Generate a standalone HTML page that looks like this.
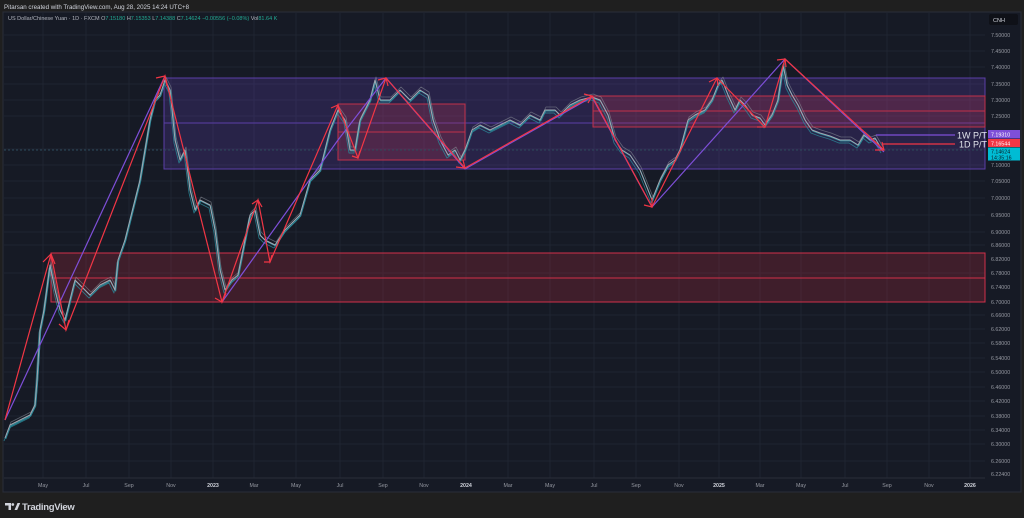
<!DOCTYPE html>
<html><head><meta charset="utf-8"><style>
html,body{margin:0;padding:0;background:#1f1f1f;width:1024px;height:518px;overflow:hidden;font-family:"Liberation Sans",sans-serif}
</style></head><body>
<svg width="1024" height="518" xmlns="http://www.w3.org/2000/svg" font-family="Liberation Sans, sans-serif">
<defs>
<polyline id="p" fill="none" stroke-linejoin="round" points="5,438 10,425 20,420 30,415 35,405 37,380 40,330 44,310 50,265 55,290 60,310 65,320 70,300 75,280 80,285 90,295 100,285 110,280 115,290 118,260 125,240 135,200 140,180 145,150 150,120 155,100 160,95 165,80 170,90 175,140 180,160 185,150 190,190 195,210 200,200 210,205 215,230 220,270 225,290 232,280 238,275 245,240 250,215 255,210 260,235 265,240 275,245 285,230 295,220 300,215 310,180 320,170 330,130 338,110 345,120 350,150 355,150 360,120 370,100 375,80 380,100 390,100 400,90 410,100 420,90 428,95 433,120 440,140 448,155 455,150 460,160 465,150 472,130 480,125 490,130 500,125 510,120 520,125 530,115 540,120 545,110 555,110 560,115 570,105 580,100 592,97 600,100 608,115 615,140 622,150 630,155 640,170 648,190 652,200 660,180 668,165 675,160 680,150 688,120 695,115 705,110 712,100 718,85 722,80 728,95 735,110 740,100 745,105 752,115 760,118 765,125 772,115 778,100 783,65 787,85 792,95 798,105 805,120 812,130 820,133 830,136 840,140 850,140 858,145 864,135 870,140 875,138 882,150"/>
</defs>
<rect width="1024" height="518" fill="#1f1f1f"/>
<text x="4" y="9" font-size="6.2" fill="#d1d4dc">Pitarsan created with TradingView.com, Aug 28, 2025 14:24 UTC+8</text>
<rect x="3" y="12" width="1018" height="480" fill="#161a25" stroke="#2a2e39"/>
<g stroke="#1f2431" stroke-width="1">
<line x1="43" y1="13" x2="43" y2="478"/><line x1="86" y1="13" x2="86" y2="478"/><line x1="129" y1="13" x2="129" y2="478"/><line x1="171" y1="13" x2="171" y2="478"/><line x1="213" y1="13" x2="213" y2="478"/><line x1="254" y1="13" x2="254" y2="478"/><line x1="296" y1="13" x2="296" y2="478"/><line x1="340" y1="13" x2="340" y2="478"/><line x1="383" y1="13" x2="383" y2="478"/><line x1="424" y1="13" x2="424" y2="478"/><line x1="466" y1="13" x2="466" y2="478"/><line x1="508" y1="13" x2="508" y2="478"/><line x1="550" y1="13" x2="550" y2="478"/><line x1="594" y1="13" x2="594" y2="478"/><line x1="636" y1="13" x2="636" y2="478"/><line x1="679" y1="13" x2="679" y2="478"/><line x1="719" y1="13" x2="719" y2="478"/><line x1="760" y1="13" x2="760" y2="478"/><line x1="801" y1="13" x2="801" y2="478"/><line x1="845" y1="13" x2="845" y2="478"/><line x1="887" y1="13" x2="887" y2="478"/><line x1="929" y1="13" x2="929" y2="478"/><line x1="970" y1="13" x2="970" y2="478"/>
<line x1="4" y1="35" x2="985" y2="35"/><line x1="4" y1="51" x2="985" y2="51"/><line x1="4" y1="67" x2="985" y2="67"/><line x1="4" y1="84" x2="985" y2="84"/><line x1="4" y1="100" x2="985" y2="100"/><line x1="4" y1="116" x2="985" y2="116"/><line x1="4" y1="149" x2="985" y2="149"/><line x1="4" y1="165" x2="985" y2="165"/><line x1="4" y1="181" x2="985" y2="181"/><line x1="4" y1="198" x2="985" y2="198"/><line x1="4" y1="215" x2="985" y2="215"/><line x1="4" y1="232" x2="985" y2="232"/><line x1="4" y1="245" x2="985" y2="245"/><line x1="4" y1="273" x2="985" y2="273"/><line x1="4" y1="315" x2="985" y2="315"/><line x1="4" y1="329" x2="985" y2="329"/><line x1="4" y1="343" x2="985" y2="343"/><line x1="4" y1="358" x2="985" y2="358"/><line x1="4" y1="372" x2="985" y2="372"/><line x1="4" y1="387" x2="985" y2="387"/><line x1="4" y1="401" x2="985" y2="401"/><line x1="4" y1="416" x2="985" y2="416"/><line x1="4" y1="430" x2="985" y2="430"/><line x1="4" y1="444" x2="985" y2="444"/><line x1="4" y1="461" x2="985" y2="461"/>
</g>
<line x1="4" y1="478" x2="985" y2="478" stroke="#2a2e39"/>
<rect x="164" y="78" width="821" height="91" fill="rgba(103,70,200,0.22)" stroke="#5b3fa8" stroke-width="1"/>
<line x1="164" y1="123" x2="985" y2="123" stroke="#5b3fa8"/>
<rect x="51" y="253" width="934" height="49" fill="rgba(160,40,60,0.30)" stroke="#d0304a" stroke-width="1"/>
<line x1="51" y1="278" x2="985" y2="278" stroke="#d0304a"/>
<rect x="338" y="104" width="127" height="56" fill="rgba(180,50,80,0.28)" stroke="#c0304a" stroke-width="1"/>
<line x1="338" y1="132" x2="465" y2="132" stroke="#c0304a"/>
<rect x="593" y="96" width="392" height="31" fill="rgba(180,50,80,0.28)" stroke="#c0304a" stroke-width="1"/>
<line x1="593" y1="111" x2="985" y2="111" stroke="#c0304a"/>
<line x1="4" y1="150" x2="985" y2="150" stroke="#2c4a5a" stroke-dasharray="2,2"/>
<use href="#p" stroke="#8a8f99" stroke-width="0.8" opacity="0.6" transform="translate(1,-3)"/>
<use href="#p" stroke="#2a8a9a" stroke-width="0.9" opacity="0.8" transform="translate(-1,3)"/>
<use href="#p" stroke="#2a8a9a" stroke-width="1" transform="translate(0.7,1)"/>
<use href="#p" stroke="#a3a8b2" stroke-width="1"/>
<polyline fill="none" stroke="#7e4fd8" stroke-width="1.2" points="5,420 165,76"/>
<polyline fill="none" stroke="#7e4fd8" stroke-width="1.2" points="222,302 338,140 386,78 465,169 592,97 652,207 785,59 884,152"/>
<polyline fill="none" stroke="#f23645" stroke-width="1.2" points="5,420 51,254 66,330 165,76 222,302 258,200 270,262 338,105 358,158 386,78 465,168 592,96 652,207 717,78 765,127 785,59 884,150"/>
<g stroke="#f23645" stroke-width="1.2" fill="none">
<path d="M43,262 L51,254 L55,264"/><path d="M59,324 L66,330 L69,320"/><path d="M156,78 L165,76 L167,86"/><path d="M215,298 L222,302 L226,293"/><path d="M252,204 L258,200 L262,207"/><path d="M264,262 L270,262 L272,255"/><path d="M331,108 L338,105 L340,113"/><path d="M352,156 L358,158 L360,151"/><path d="M378,80 L386,78 L388,86"/><path d="M456,167 L465,168 L463,160"/><path d="M584,94 L592,96 L588,103"/><path d="M644,205 L652,207 L652,198"/><path d="M709,82 L717,78 L718,86"/><path d="M757,127 L765,127"/><path d="M777,60 L785,59 L786,67"/><path d="M875,150 L884,150 L882,142"/>
</g>
<line x1="876" y1="135" x2="955" y2="135" stroke="#7e4fd8" stroke-width="1.2"/>
<line x1="883" y1="144" x2="955" y2="144" stroke="#f23645" stroke-width="1.2"/>
<text x="957" y="138.5" font-size="9" fill="#e0e3eb">1W P/T</text>
<text x="959" y="147.5" font-size="9" fill="#e0e3eb">1D P/T</text>
<text x="8" y="20" font-size="5.5" fill="#b2b5be">US Dollar/Chinese Yuan · 1D · FXCM  O<tspan fill="#22ab94">7.15180</tspan>  H<tspan fill="#22ab94">7.15353</tspan>  L<tspan fill="#22ab94">7.14388</tspan>  C<tspan fill="#22ab94">7.14624</tspan>  <tspan fill="#22ab94">−0.00556 (−0.08%)</tspan>  Vol<tspan fill="#22ab94">81.64 K</tspan></text>
<rect x="987" y="13" width="33" height="478" fill="#161a25"/>
<rect x="989" y="14" width="29" height="11" rx="2" fill="#0f1118"/>
<text x="993" y="22" font-size="5.5" fill="#d1d4dc">CNH</text>
<g font-size="5.3" fill="#9598a1">
<text x="991" y="37">7.50000</text><text x="991" y="53">7.45000</text><text x="991" y="69">7.40000</text><text x="991" y="86">7.35000</text><text x="991" y="102">7.30000</text><text x="991" y="118">7.25000</text><text x="991" y="167">7.10000</text><text x="991" y="183">7.05000</text><text x="991" y="200">7.00000</text><text x="991" y="217">6.95000</text><text x="991" y="234">6.90000</text><text x="991" y="247">6.86000</text><text x="991" y="261">6.82000</text><text x="991" y="275">6.78000</text><text x="991" y="289">6.74000</text><text x="991" y="304">6.70000</text><text x="991" y="317">6.66000</text><text x="991" y="331">6.62000</text><text x="991" y="345">6.58000</text><text x="991" y="360">6.54000</text><text x="991" y="374">6.50000</text><text x="991" y="389">6.46000</text><text x="991" y="403">6.42000</text><text x="991" y="418">6.38000</text><text x="991" y="432">6.34000</text><text x="991" y="446">6.30000</text><text x="991" y="463">6.26000</text><text x="991" y="476">6.22400</text>
</g>
<rect x="988" y="130" width="32" height="8.5" fill="#7e4fd8"/>
<text x="991" y="136.5" font-size="5.3" fill="#fff">7.19310</text>
<rect x="988" y="139" width="32" height="8" fill="#f23645"/>
<text x="991" y="145.5" font-size="5.3" fill="#fff">7.16544</text>
<rect x="988" y="147.5" width="32" height="13" fill="#00bcd4"/>
<text x="991" y="153.5" font-size="5.3" fill="#0b1b24">7.14624</text>
<text x="991" y="159.5" font-size="5.3" fill="#0b1b24">14:35:16</text>
<g font-size="5.3" fill="#9598a1" text-anchor="middle">
<text x="43" y="487">May</text><text x="86" y="487">Jul</text><text x="129" y="487">Sep</text><text x="171" y="487">Nov</text><text x="213" y="487" fill="#d1d4dc" font-weight="bold">2023</text><text x="254" y="487">Mar</text><text x="296" y="487">May</text><text x="340" y="487">Jul</text><text x="383" y="487">Sep</text><text x="424" y="487">Nov</text><text x="466" y="487" fill="#d1d4dc" font-weight="bold">2024</text><text x="508" y="487">Mar</text><text x="550" y="487">May</text><text x="594" y="487">Jul</text><text x="636" y="487">Sep</text><text x="679" y="487">Nov</text><text x="719" y="487" fill="#d1d4dc" font-weight="bold">2025</text><text x="760" y="487">Mar</text><text x="801" y="487">May</text><text x="845" y="487">Jul</text><text x="887" y="487">Sep</text><text x="929" y="487">Nov</text><text x="970" y="487" fill="#d1d4dc" font-weight="bold">2026</text>
</g>
<g fill="#d1d4dc">
<path d="M5,503 h6 v7 h-2.5 v-4.5 h-3.5z"/><circle cx="12.8" cy="504.5" r="1.4"/><path d="M14.5,510 l3,-7 h2.7 l-3,7z"/>
</g>
<text x="22" y="510" font-size="9.5" fill="#d1d4dc" font-weight="bold" letter-spacing="-0.3">TradingView</text>
</svg>
</body></html>
